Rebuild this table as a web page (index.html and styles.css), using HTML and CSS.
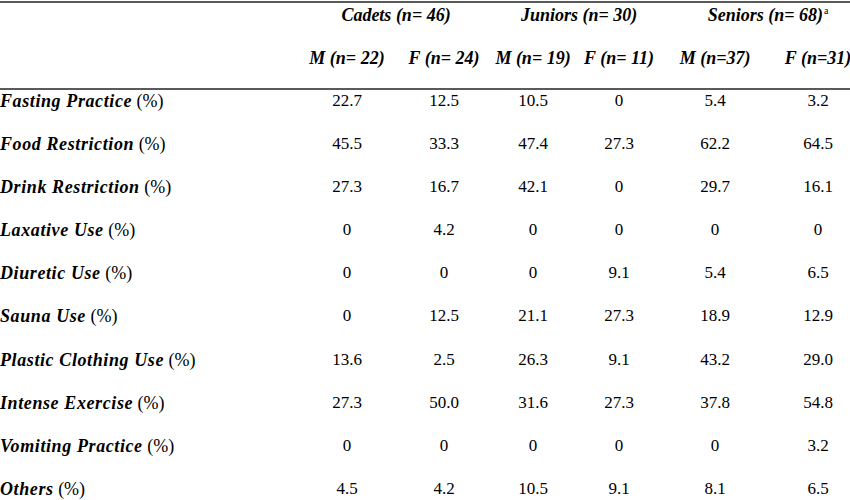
FILE: index.html
```html
<!DOCTYPE html>
<html lang="en">
<head>
<meta charset="utf-8">
<title>Weight-loss practices by category</title>
<link rel="stylesheet" href="styles.css">
</head>
<body>
<table class="stats">
  <colgroup>
    <col class="c-label">
    <col class="c1"><col class="c2"><col class="c3"><col class="c4"><col class="c5"><col class="c6">
  </colgroup>
  <thead>
    <tr class="group-row">
      <th></th>
      <th colspan="2">Cadets (n= 46)</th>
      <th colspan="2">Juniors (n= 30)</th>
      <th colspan="2">Seniors (n= 68)<sup class="note">a</sup></th>
    </tr>
    <tr class="sex-row">
      <th></th>
      <th>M (n= 22)</th>
      <th>F (n= 24)</th>
      <th>M (n= 19)</th>
      <th>F (n= 11)</th>
      <th>M (n=37)</th>
      <th>F (n=31)</th>
    </tr>
  </thead>
  <tbody>
    <tr><th scope="row"><em>Fasting Practice</em> (%)</th><td>22.7</td><td>12.5</td><td>10.5</td><td>0</td><td>5.4</td><td>3.2</td></tr>
    <tr><th scope="row"><em>Food Restriction</em> (%)</th><td>45.5</td><td>33.3</td><td>47.4</td><td>27.3</td><td>62.2</td><td>64.5</td></tr>
    <tr><th scope="row"><em>Drink Restriction</em> (%)</th><td>27.3</td><td>16.7</td><td>42.1</td><td>0</td><td>29.7</td><td>16.1</td></tr>
    <tr><th scope="row"><em>Laxative Use</em> (%)</th><td>0</td><td>4.2</td><td>0</td><td>0</td><td>0</td><td>0</td></tr>
    <tr><th scope="row"><em>Diuretic Use</em> (%)</th><td>0</td><td>0</td><td>0</td><td>9.1</td><td>5.4</td><td>6.5</td></tr>
    <tr><th scope="row"><em>Sauna Use</em> (%)</th><td>0</td><td>12.5</td><td>21.1</td><td>27.3</td><td>18.9</td><td>12.9</td></tr>
    <tr><th scope="row"><em>Plastic Clothing Use</em> (%)</th><td>13.6</td><td>2.5</td><td>26.3</td><td>9.1</td><td>43.2</td><td>29.0</td></tr>
    <tr><th scope="row"><em>Intense Exercise</em> (%)</th><td>27.3</td><td>50.0</td><td>31.6</td><td>27.3</td><td>37.8</td><td>54.8</td></tr>
    <tr><th scope="row"><em>Vomiting Practice</em> (%)</th><td>0</td><td>0</td><td>0</td><td>0</td><td>0</td><td>3.2</td></tr>
    <tr><th scope="row"><em>Others</em> (%)</th><td>4.5</td><td>4.2</td><td>10.5</td><td>9.1</td><td>8.1</td><td>6.5</td></tr>
  </tbody>
</table>
</body>
</html>
```

FILE: styles.css
```css
html, body {
  margin: 0;
  padding: 0;
  overflow: hidden;
  background: #ffffff;
}

body {
  padding-top: 1px;
  font-family: "Liberation Serif", "Times New Roman", serif;
  font-size: 18px;
  color: #000000;
}

.stats {
  border-collapse: collapse;
  table-layout: fixed;
  width: 871px;
}

.c-label { width: 299px; }
.c1 { width: 96px; }
.c2 { width: 98px; }
.c3 { width: 80px; }
.c4 { width: 92px; }
.c5 { width: 100px; }
.c6 { width: 106px; }

.stats th,
.stats td {
  padding: 0;
  line-height: 20px;
  white-space: nowrap;
}

.stats thead th {
  font-weight: bold;
  font-style: italic;
  text-align: center;
  vertical-align: middle;
}

.group-row th {
  border-top: 2px solid #5a5a5a;
  height: 24px;
}

.sex-row th {
  height: 61px;
  border-bottom: 2px solid #5a5a5a;
}

.note {
  font-weight: normal;
  font-style: normal;
  font-size: 10px;
  vertical-align: 7px;
  line-height: 0;
  margin-left: 1px;
}

.stats tbody th,
.stats tbody td {
  height: 42.1px;
  vertical-align: top;
  padding-top: 1px;
}

.stats tbody th {
  text-align: left;
  font-weight: normal;
  font-style: normal;
}

.stats tbody th em {
  font-weight: bold;
  font-style: italic;
  letter-spacing: 0.6px;
}

.stats tbody td {
  text-align: center;
  font-size: 17px;
}
```
